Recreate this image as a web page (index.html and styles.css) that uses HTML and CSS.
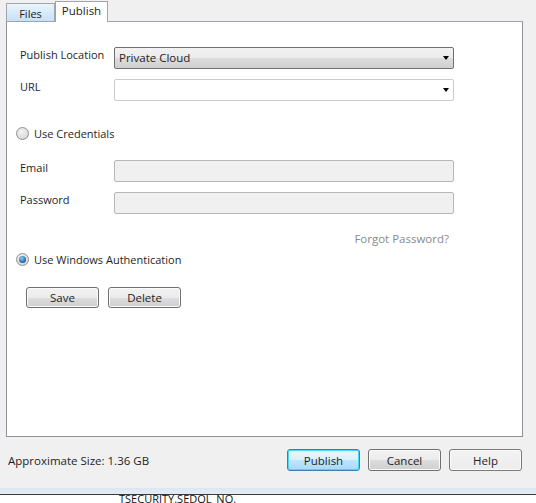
FILE: index.html
```html
<!DOCTYPE html>
<html>
<head>
<meta charset="utf-8">
<link rel="stylesheet" href="styles.css">
</head>
<body>
<div class="window">
  <div class="tabs">
    <div class="tab tab-files">Files</div>
    <div class="tab tab-active">Publish</div>
  </div>
  <div class="panel">
    <div class="row row-first">
      <div class="label">Publish Location</div>
      <div class="combo combo-drop"><span>Private Cloud</span><span class="arrow"></span></div>
    </div>
    <div class="row">
      <div class="label">URL</div>
      <div class="combo combo-edit"><span></span><span class="arrow"></span></div>
    </div>
    <div class="radio-row radio-cred">
      <span class="radio"></span><span>Use Credentials</span>
    </div>
    <div class="row row-email">
      <div class="label">Email</div>
      <div class="input"></div>
    </div>
    <div class="row">
      <div class="label">Password</div>
      <div class="input"></div>
    </div>
    <div class="forgot">Forgot Password?</div>
    <div class="radio-row radio-win">
      <span class="radio radio-checked"></span><span>Use Windows Authentication</span>
    </div>
    <div class="btn-row">
      <button class="btn">Save</button>
      <button class="btn">Delete</button>
    </div>
  </div>
  <div class="footer">
    <div class="size">Approximate Size: 1.36 GB</div>
    <div class="footer-btns">
      <button class="btn btn-default">Publish</button>
      <button class="btn">Cancel</button>
      <button class="btn btn-plain">Help</button>
    </div>
  </div>
  <div class="strip"></div>
</div>
<div class="below"><span class="below-text">TSECURITY.SEDOL_NO.</span></div>
</body>
</html>
```

FILE: styles.css
```css
html, body {
  margin: 0;
  padding: 0;
}
body {
  width: 536px;
  height: 503px;
  overflow: hidden;
  background: #ffffff;
  font-family: "Open Sans", "Noto Sans", sans-serif;
  font-size: 11px;
  color: #1e1e1e;
}
.window {
  background: #f0f0f0;
  height: 494px;
  border-bottom: 1px solid #3a3a3a;
  display: flex;
  flex-direction: column;
}
.tabs {
  display: flex;
  align-items: flex-end;
  height: 21px;
  padding-left: 6px;
}
.tab {
  box-sizing: border-box;
  border: 1px solid #a0a4ab;
  border-bottom: none;
  display: flex;
  align-items: center;
  justify-content: center;
}
.tab-files {
  width: 49px;
  height: 18px;
  background: linear-gradient(#eaf4fc, #c6e2f7);
  padding-top: 1px;
}
.tab-active {
  width: 53px;
  height: 21px;
  background: #ffffff;
  margin-bottom: -1px;
  position: relative;
  z-index: 1;
  padding-bottom: 3px;
  font-size: 11.5px;
}
.panel {
  box-sizing: border-box;
  margin-left: 6px;
  width: 517px;
  height: 416px;
  background: #ffffff;
  border: 1px solid #8d9096;
  border-top-color: #a0a4ab;
}
.row {
  display: flex;
  align-items: flex-start;
  margin-top: 10px;
  height: 22px;
}
.row-first {
  margin-top: 25px;
}
.label {
  width: 94px;
  padding-left: 13px;
  line-height: 15px;
}
.combo {
  box-sizing: border-box;
  width: 340px;
  height: 22px;
  border-radius: 2px;
  display: flex;
  align-items: center;
  justify-content: space-between;
  padding: 0 4px 0 4px;
}
.combo-drop {
  border: 1px solid #707070;
  background: linear-gradient(#f2f2f2 0%, #ebebeb 50%, #dddddd 51%, #cfcfcf 100%);
  padding-bottom: 1px;
  font-size: 11.5px;
}
.combo-edit {
  border: 1px solid #c9cbd0;
  background: #ffffff;
}
.arrow {
  width: 0;
  height: 0;
  border-left: 3.5px solid transparent;
  border-right: 3.5px solid transparent;
  border-top: 4px solid #000000;
}
.radio-row {
  display: flex;
  align-items: center;
  padding-left: 9px;
  height: 16px;
}
.radio-cred {
  margin-top: 24px;
}
.radio {
  box-sizing: border-box;
  width: 13px;
  height: 13px;
  border-radius: 50%;
  border: 1px solid #8e8f8f;
  background: radial-gradient(circle at 40% 35%, #f4f4f4, #cfcfcf);
  margin-right: 5px;
  display: flex;
  align-items: center;
  justify-content: center;
}
.radio-checked::after {
  content: "";
  width: 7px;
  height: 7px;
  border-radius: 50%;
  background: radial-gradient(circle at 40% 35%, #8ad0f4, #1d5f9e 70%, #0f3d6b);
}
.row-email {
  margin-top: 19px;
}
.input {
  box-sizing: border-box;
  width: 340px;
  height: 22px;
  border: 1px solid #b4b6ba;
  border-radius: 2px;
  background: #f0f0f0;
}
.forgot {
  margin-top: 17px;
  text-align: right;
  padding-right: 73px;
  color: #8a8a8a;
  line-height: 16px;
  font-size: 11.5px;
}
.radio-win {
  margin-top: 4px;
}
.btn-row {
  display: flex;
  gap: 9px;
  padding-left: 19px;
  margin-top: 20px;
}
.btn {
  box-sizing: border-box;
  width: 73px;
  height: 21px;
  border: 1px solid #707070;
  border-radius: 3px;
  background: linear-gradient(#f2f2f2 0%, #ebebeb 50%, #dddddd 51%, #cfcfcf 100%);
  font-family: inherit;
  font-size: 11.5px;
  color: #1e1e1e;
  padding: 0;
  box-shadow: inset 0 0 0 1px #fbfbfb;
}
.footer {
  display: flex;
  align-items: flex-start;
  justify-content: space-between;
  height: 51px;
  padding: 0 14px 0 8px;
}
.size {
  padding-top: 16px;
  font-size: 11.5px;
}
.footer-btns {
  display: flex;
  gap: 8px;
  padding-top: 12px;
}
.footer-btns .btn {
  height: 22px;
  width: 73px;
}
.btn-default {
  border-color: #3c7fb1;
  box-shadow: inset 0 0 0 1px #48d8fb;
  background: linear-gradient(#eaf6fd 0%, #d9f0fc 50%, #bee6fd 51%, #a7d9f5 100%);
}
.btn-plain {
  background: linear-gradient(#f3f3f3, #ececec);
  border-color: #7a7a7a;
}
.strip {
  height: 6px;
  background: linear-gradient(#dce6f2, #e4ecf6);
}
.below {
  height: 8px;
  overflow: hidden;
}
.below-text {
  display: block;
  padding-left: 119px;
  margin-top: -3px;
  font-size: 11px;
  line-height: 14px;
  color: #111;
}
```
